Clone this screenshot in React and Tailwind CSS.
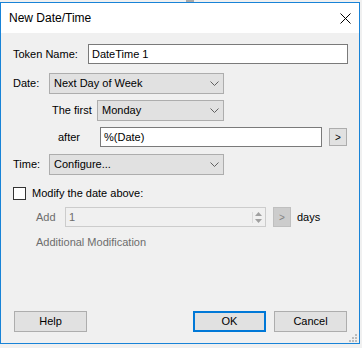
import React from "react"

const font = { fontFamily: "'Liberation Sans', Arial, sans-serif" }

function Chevron() {
  return (
    <svg width="9" height="5" viewBox="0 0 9 5" className="shrink-0">
      <polyline points="0.5,0.5 4.5,4.5 8.5,0.5" fill="none" stroke="#606060" strokeWidth="1" />
    </svg>
  )
}

function Combo({ value, width }) {
  return (
    <div
      className={`h-[21px] ${width} bg-[#e1e1e1] border border-[#adadad] flex items-center justify-between pl-[4px] pr-[4px] text-[11px] text-black`}
    >
      <span>{value}</span>
      <Chevron />
    </div>
  )
}

function ArrowButton({ disabled }) {
  return (
    <div
      className={
        disabled
          ? "w-[18px] h-[20px] bg-[#cccccc] border border-[#bfbfbf] flex items-center justify-center text-[10px] text-[#838383]"
          : "w-[18px] h-[18px] bg-[#e1e1e1] border border-[#adadad] flex items-center justify-center text-[10px] text-black"
      }
    >
      &gt;
    </div>
  )
}

export default function App() {
  return (
    <div className="w-[362px] h-[348px] bg-[#f0f0f0] overflow-hidden" style={font}>
      {/* top edge with the little tab */}
      <div className="h-[2px] flex">
        <div className="ml-[186px] w-[8px] h-[2px] bg-[#a8a8a8]" />
      </div>

      {/* window */}
      <div className="relative w-[360px] h-[342px] border border-[#1883d7] flex flex-col">
        {/* title bar */}
        <div className="h-[30px] bg-white flex items-center justify-between pl-[8px] pr-[8px]">
          <span className="text-[12px] text-black">New Date/Time</span>
          <svg width="11" height="11" viewBox="0 0 11 11">
            <path d="M0.5 0.5 L10.5 10.5 M10.5 0.5 L0.5 10.5" stroke="#000" strokeWidth="1" />
          </svg>
        </div>

        {/* body */}
        <div className="flex-1 flex flex-col pl-[12px] pr-[11px] pb-[11px] text-[11px] text-black">
          {/* Token name */}
          <div className="mt-[11px] flex items-center h-[20px]">
            <span className="w-[75px]">Token Name:</span>
            <div className="w-[260px] h-[20px] bg-white border border-[#7a7a7a] flex items-center pl-[3px]">
              DateTime 1
            </div>
          </div>

          {/* Date */}
          <div className="mt-[9px] flex items-center">
            <span className="w-[36px]">Date:</span>
            <Combo value="Next Day of Week" width="w-[175px]" />
          </div>

          {/* The first */}
          <div className="mt-[6px] flex items-center">
            <span className="ml-[39px] w-[45px]">The first</span>
            <Combo value="Monday" width="w-[127px]" />
          </div>

          {/* after */}
          <div className="mt-[6px] flex items-center">
            <span className="ml-[45px] w-[42px]">after</span>
            <div className="w-[222px] h-[20px] bg-white border border-[#7a7a7a] flex items-center pl-[3px]">
              %(Date)
            </div>
            <div className="ml-[7px]">
              <ArrowButton />
            </div>
          </div>

          {/* Time */}
          <div className="mt-[7px] flex items-center">
            <span className="w-[36px]">Time:</span>
            <Combo value="Configure..." width="w-[175px]" />
          </div>

          {/* Modify checkbox */}
          <div className="mt-[12px] flex items-center h-[13px]">
            <div className="w-[13px] h-[13px] bg-white border border-[#333333]" />
            <span className="ml-[6px]">Modify the date above:</span>
          </div>

          {/* Add row */}
          <div className="mt-[7px] flex items-center">
            <span className="ml-[23px] w-[29px] text-[#6d6d6d]">Add</span>
            <div className="w-[201px] h-[20px] border border-[#cccccc] flex items-center justify-between pl-[3px] pr-[3px] text-[#6d6d6d]">
              <span>1</span>
              <div className="flex flex-col items-center gap-[3px] border-l border-[#dadada] pl-[2px]">
                <svg width="7" height="4" viewBox="0 0 7 4"><polygon points="0,4 3.5,0 7,4" fill="#a0a0a0" /></svg>
                <svg width="7" height="4" viewBox="0 0 7 4"><polygon points="0,0 3.5,4 7,0" fill="#a0a0a0" /></svg>
              </div>
            </div>
            <div className="ml-[7px]">
              <ArrowButton disabled />
            </div>
            <span className="ml-[6px]">days</span>
          </div>

          {/* Additional modification */}
          <div className="mt-[8px] ml-[23px] h-[14px] flex items-center text-[#6d6d6d]">
            Additional Modification
          </div>

          {/* buttons */}
          <div className="mt-auto flex items-center">
            <div className="ml-[1px] w-[73px] h-[21px] bg-[#e1e1e1] border border-[#adadad] flex items-center justify-center">
              Help
            </div>
            <div className="ml-[106px] w-[73px] h-[21px] bg-[#e1e1e1] border-2 border-[#0078d7] flex items-center justify-center">
              OK
            </div>
            <div className="ml-[8px] w-[73px] h-[21px] bg-[#e1e1e1] border border-[#adadad] flex items-center justify-center">
              Cancel
            </div>
          </div>
        </div>

        {/* resize grip */}
        <svg width="8" height="8" viewBox="0 0 8 8" className="absolute right-[2px] bottom-[1px]">
          <rect x="6" y="0" width="2" height="2" fill="#bcbcbc" />
          <rect x="3" y="3" width="2" height="2" fill="#bcbcbc" />
          <rect x="6" y="3" width="2" height="2" fill="#bcbcbc" />
          <rect x="0" y="6" width="2" height="2" fill="#bcbcbc" />
          <rect x="3" y="6" width="2" height="2" fill="#bcbcbc" />
          <rect x="6" y="6" width="2" height="2" fill="#bcbcbc" />
        </svg>
      </div>
    </div>
  )
}
